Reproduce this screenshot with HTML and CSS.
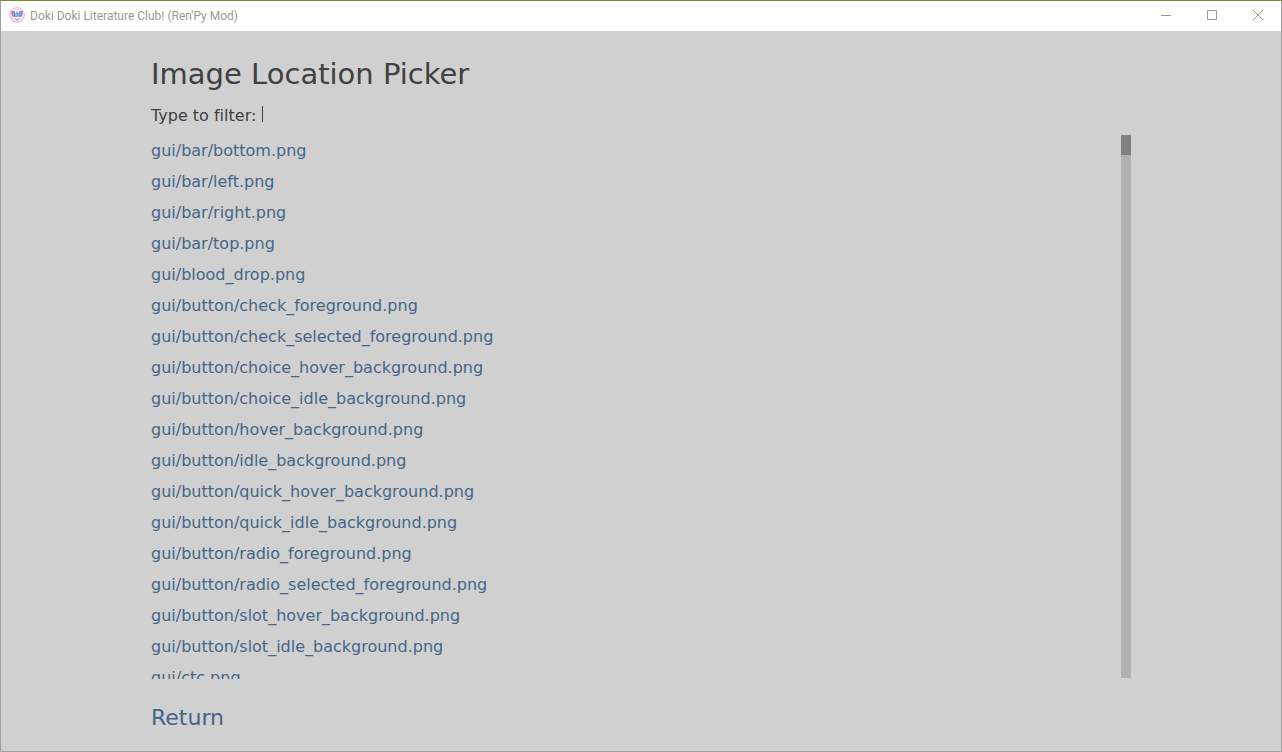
FILE: index.html
```html
<!DOCTYPE html>
<html lang="en">
<head>
<meta charset="utf-8">
<title>Doki Doki Literature Club! (Ren'Py Mod)</title>
<link rel="stylesheet" href="styles.css">
</head>
<body>
<div class="window">
  <header class="titlebar">
    <svg class="app-icon" viewBox="0 0 16 16" aria-hidden="true">
      <circle cx="8" cy="8" r="7.4" fill="#fbdcec" stroke="#f7b5d5"/>
      <path d="M2 4h2l1 5H3z" fill="#e56fae"/>
      <path d="M4 4h2v5H5z" fill="#5d8fe0"/>
      <path d="M6 5h2v4H6z" fill="#62cfd6"/>
      <path d="M8 5h2v4H8z" fill="#a38be0"/>
      <path d="M10 4h2v5h-2z" fill="#52b9dc"/>
      <path d="M12 4h2l-1 5h-1z" fill="#d9659f"/>
      <path d="M6 3h1v3H6zM9 3h1v3H9z" fill="#fff"/>
      <path d="M3 9h10l-1 1H4z" fill="#8c9be4"/>
      <path d="M5 10h6l-1 1H6z" fill="#fff"/>
      <path d="M5 11l3 1 3-1-3 3z" fill="#71bde4"/>
    </svg>
    <span class="title">Doki Doki Literature Club! (Ren'Py Mod)</span>
    <div class="controls">
      <button type="button" aria-label="Minimize"><svg viewBox="0 0 10 10"><path d="M0 5.5h10"/></svg></button>
      <button type="button" aria-label="Maximize"><svg viewBox="0 0 10 10"><path d="M.5.5h9v9h-9z"/></svg></button>
      <button type="button" aria-label="Close"><svg viewBox="0 0 10 10"><path d="M0 0l10 10M10 0L0 10"/></svg></button>
    </div>
  </header>
  <main class="content">
    <h1>Image Location Picker</h1>
    <div class="filter">
      <label for="filter">Type to filter:</label>
      <span class="caret"></span>
      <input id="filter" type="text" autocomplete="off">
    </div>
    <div class="viewport">
      <ul class="files">
        <li><button type="button">gui/bar/bottom.png</button></li>
        <li><button type="button">gui/bar/left.png</button></li>
        <li><button type="button">gui/bar/right.png</button></li>
        <li><button type="button">gui/bar/top.png</button></li>
        <li><button type="button">gui/blood_drop.png</button></li>
        <li><button type="button">gui/button/check_foreground.png</button></li>
        <li><button type="button">gui/button/check_selected_foreground.png</button></li>
        <li><button type="button">gui/button/choice_hover_background.png</button></li>
        <li><button type="button">gui/button/choice_idle_background.png</button></li>
        <li><button type="button">gui/button/hover_background.png</button></li>
        <li><button type="button">gui/button/idle_background.png</button></li>
        <li><button type="button">gui/button/quick_hover_background.png</button></li>
        <li><button type="button">gui/button/quick_idle_background.png</button></li>
        <li><button type="button">gui/button/radio_foreground.png</button></li>
        <li><button type="button">gui/button/radio_selected_foreground.png</button></li>
        <li><button type="button">gui/button/slot_hover_background.png</button></li>
        <li><button type="button">gui/button/slot_idle_background.png</button></li>
        <li><button type="button">gui/ctc.png</button></li>
      </ul>
      <div class="track"><div class="thumb"></div></div>
    </div>
    <button type="button" class="return">Return</button>
  </main>
</div>
</body>
</html>
```
FILE: styles.css
```css
* {
  box-sizing: border-box;
}

body {
  margin: 0;
  font: 16px/31px "DejaVu Sans", sans-serif;
  font-variant-ligatures: none;
  color: #404040;
}

button,
input {
  margin: 0;
  padding: 0;
  border: 0;
  background: none;
  font: inherit;
  color: inherit;
}

.window {
  display: flex;
  flex-direction: column;
  height: 100vh;
  border: 1px solid #a0a0a0;
  border-top-color: #76892f;
  background: #d0d0d0;
}

.titlebar {
  display: flex;
  align-items: flex-start;
  flex: none;
  height: 30px;
  padding-left: 8px;
  background: #fff;
  color: #999;
  font: 12px/30px Roboto, sans-serif;
}

.app-icon {
  width: 16px;
  height: 16px;
  margin: 6px 5px 0 0;
}

.title {
  flex: 1;
}

.controls {
  display: flex;
}

.controls button {
  display: flex;
  align-items: center;
  justify-content: center;
  width: 46px;
  height: 28px;
}

.controls svg {
  width: 10px;
  height: 10px;
  fill: none;
  stroke: #999;
}

.content {
  display: flex;
  flex-direction: column;
  flex: 1;
  min-height: 0;
  padding: 24px 150px 18px;
}

h1 {
  margin: 0;
  font-size: 29px;
  font-weight: 400;
  line-height: 38px;
}

.filter {
  display: flex;
  align-items: center;
  height: 32px;
  margin: 6px 0 4px;
}

.caret {
  width: 1px;
  height: 16px;
  margin: 0 0 2px 6px;
  background: #404040;
}

.filter input {
  flex: 1;
  outline: 0;
}

.viewport {
  display: flex;
  flex: 1;
  min-height: 0;
  overflow: hidden;
}

.files {
  flex: 1;
  margin: 0;
  padding: 0;
  list-style: none;
}

.files li {
  height: 31px;
}

.files button,
.return {
  display: block;
  color: #446688;
  cursor: pointer;
}

.track {
  width: 10px;
  margin-bottom: 1px;
  background: #b0b0b0;
}

.thumb {
  height: 20px;
  background: #808080;
}

.return {
  align-self: flex-start;
  margin-top: 24px;
  font-size: 22px;
  line-height: 30px;
}
```
